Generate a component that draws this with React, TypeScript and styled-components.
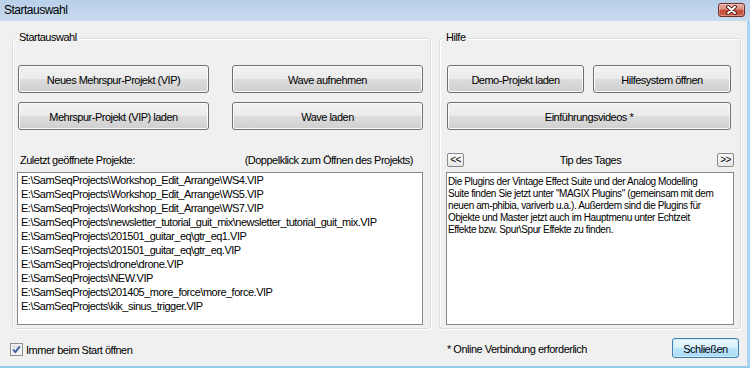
import React from "react";
import styled, { createGlobalStyle } from "styled-components";

const GlobalStyle = createGlobalStyle`
  html, body { margin: 0; padding: 0; background: #f0f0f0; }
  body { font-family: "Liberation Sans", Arial, sans-serif; }
  * { box-sizing: border-box; }
`;

const Window = styled.div`
  width: 750px;
  height: 368px;
  display: flex;
  flex-direction: column;
  overflow: hidden;
  font-family: "Liberation Sans", Arial, sans-serif;
  font-size: 11px;
  letter-spacing: -0.5px;
  color: #000;
  background: #f0f0f0;
`;

const TitleBar = styled.div`
  height: 21px;
  flex: none;
  display: flex;
  align-items: flex-start;
  justify-content: space-between;
  padding: 0 5px 0 4px;
  background: linear-gradient(#b8cfe9, #c8dbf0);
`;

const Title = styled.span`
  font-size: 12px;
  line-height: 20px;
`;

const CloseButton = styled.button`
  margin-top: 3px;
  width: 27px;
  height: 14px;
  padding: 0;
  border: 1px solid #6e2d27;
  border-radius: 3px;
  background: linear-gradient(#eab0a3 0%, #dc8a79 45%, #c64a3a 52%, #d0614f 100%);
  box-shadow: inset 0 0 0 1px rgba(255, 255, 255, 0.3);
  display: flex;
  align-items: center;
  justify-content: center;
`;

const Body = styled.div`
  flex: 1;
  display: flex;
  flex-direction: column;
  padding-top: 17px;
  border-right: 3px solid #a9d3ee;
  border-bottom: 2px solid #8fcbe9;
`;

const GroupsRow = styled.div`
  display: flex;
  gap: 8px;
  padding-left: 12px;
`;

const Group = styled.section<{ $width: number; $padL: number; $padR: number }>`
  position: relative;
  width: ${(p) => p.$width}px;
  height: 291px;
  border: 1px solid #d5dfe5;
  border-radius: 3px;
  box-shadow: inset 1px 1px 0 #fff, 1px 1px 0 #fff;
  padding: 26px ${(p) => p.$padR}px 3px ${(p) => p.$padL}px;
  display: flex;
  flex-direction: column;
`;

const Legend = styled.span`
  position: absolute;
  top: -9px;
  left: 4px;
  padding: 0 2px;
  background: #f0f0f0;
  line-height: 14px;
`;

const ButtonGrid = styled.div<{ $cols: string; $gap: number }>`
  display: grid;
  grid-template-columns: ${(p) => p.$cols};
  column-gap: ${(p) => p.$gap}px;
  row-gap: 9px;
  padding-left: 1px;
`;

const Button = styled.button<{ $span?: boolean }>`
  height: 28px;
  padding: 0;
  border: 1px solid #707070;
  border-radius: 3px;
  background: linear-gradient(#f2f2f2 0%, #ebebeb 50%, #dddddd 50%, #cfcfcf 100%);
  box-shadow: inset 0 0 0 1px #fbfbfb;
  font-family: inherit;
  font-size: 11px;
  letter-spacing: -0.5px;
  color: #000;
  padding-top: 2px;
  ${(p) => (p.$span ? "grid-column: 1 / -1;" : "")}
`;

const DefaultButton = styled(Button)`
  height: 20px;
  width: 67px;
  padding-top: 1px;
  border-color: #3c7fb1;
  background: linear-gradient(#eaf6fd 0%, #d9f0fc 50%, #bee6fd 50%, #a7d9f5 100%);
  box-shadow: inset 0 0 0 1px #cdebfb;
`;

const SectionHeader = styled.div<{ $padL: number; $padR: number }>`
  margin-top: 23px;
  height: 14px;
  display: flex;
  align-items: center;
  justify-content: space-between;
  padding: 0 ${(p) => p.$padR}px 0 ${(p) => p.$padL}px;
  line-height: 14px;
`;

const SmallButton = styled.button`
  width: 17px;
  height: 14px;
  padding: 0;
  border: 1px solid #8a8a8a;
  border-radius: 2px;
  background: linear-gradient(#fafafa, #e6e6e6);
  font-family: inherit;
  font-size: 10px;
  letter-spacing: -0.6px;
  line-height: 12px;
  color: #000;
`;

const ListBox = styled.div`
  margin-top: 5px;
  height: 153px;
  border: 1px solid #828790;
  background: #fff;
  padding: 0 0 0 3px;
  line-height: 14px;
  overflow: hidden;
`;

const ListItem = styled.div`
  white-space: nowrap;
`;

const TipBox = styled.div`
  margin-top: 5px;
  height: 153px;
  border: 1px solid #828790;
  background: #fff;
  padding: 3px 2px 0 1px;
  font-size: 10px;
  letter-spacing: -0.4px;
  line-height: 12px;
  overflow: hidden;
`;

const TipLine = styled.div`
  white-space: nowrap;
`;

const Footer = styled.div`
  margin-top: 9px;
  height: 20px;
  display: grid;
  grid-template-columns: 437px 225px 67px;
  align-items: center;
  padding-left: 10px;
`;

const CheckRow = styled.label`
  margin-top: 3px;
  display: flex;
  align-items: center;
  gap: 3px;
`;

const CheckBox = styled.span`
  width: 13px;
  height: 13px;
  border: 1px solid #8e8f8f;
  background: linear-gradient(135deg, #dcdcdc, #fbfbfb);
  box-shadow: inset 0 0 0 1px #f4f4f4;
  display: flex;
  align-items: center;
  justify-content: center;
`;

const Note = styled.span`
  margin-top: 2px;
`;

const projects = [
  "E:\\SamSeqProjects\\Workshop_Edit_Arrange\\WS4.VIP",
  "E:\\SamSeqProjects\\Workshop_Edit_Arrange\\WS5.VIP",
  "E:\\SamSeqProjects\\Workshop_Edit_Arrange\\WS7.VIP",
  "E:\\SamSeqProjects\\newsletter_tutorial_guit_mix\\newsletter_tutorial_guit_mix.VIP",
  "E:\\SamSeqProjects\\201501_guitar_eq\\gtr_eq1.VIP",
  "E:\\SamSeqProjects\\201501_guitar_eq\\gtr_eq.VIP",
  "E:\\SamSeqProjects\\drone\\drone.VIP",
  "E:\\SamSeqProjects\\NEW.VIP",
  "E:\\SamSeqProjects\\201405_more_force\\more_force.VIP",
  "E:\\SamSeqProjects\\kik_sinus_trigger.VIP",
];

const tipLines = [
  "Die Plugins der Vintage Effect Suite und der Analog Modelling",
  "Suite finden Sie jetzt unter \"MAGIX Plugins\" (gemeinsam mit dem",
  "neuen am-phibia, variverb u.a.). Außerdem sind die Plugins für",
  "Objekte und Master jetzt auch im Hauptmenu unter Echtzeit",
  "Effekte bzw. Spur\\Spur Effekte zu finden.",
];

export default function App() {
  return (
    <>
      <GlobalStyle />
      <Window>
        <TitleBar>
          <Title>Startauswahl</Title>
          <CloseButton aria-label="Schließen">
            <svg width="13" height="10" viewBox="0 0 13 10">
              <path d="M3 1.8 L10 8.2 M10 1.8 L3 8.2" stroke="#4a1a16" strokeWidth="3.8" strokeLinecap="round" />
              <path d="M3 1.8 L10 8.2 M10 1.8 L3 8.2" stroke="#ffffff" strokeWidth="2" strokeLinecap="round" />
            </svg>
          </CloseButton>
        </TitleBar>
        <Body>
          <GroupsRow>
            <Group $width={419} $padL={4} $padR={7}>
              <Legend>Startauswahl</Legend>
              <ButtonGrid $cols="191px 191px" $gap={23}>
                <Button>Neues Mehrspur-Projekt (VIP)</Button>
                <Button>Wave aufnehmen</Button>
                <Button>Mehrspur-Projekt (VIP) laden</Button>
                <Button>Wave laden</Button>
              </ButtonGrid>
              <SectionHeader $padL={3} $padR={10}>
                <span>Zuletzt geöffnete Projekte:</span>
                <span>(Doppelklick zum Öffnen des Projekts)</span>
              </SectionHeader>
              <ListBox>
                {projects.map((p) => (
                  <ListItem key={p}>{p}</ListItem>
                ))}
              </ListBox>
            </Group>
            <Group $width={302} $padL={6} $padR={6}>
              <Legend>Hilfe</Legend>
              <ButtonGrid $cols="137px 138px" $gap={9}>
                <Button>Demo-Projekt laden</Button>
                <Button>Hilfesystem öffnen</Button>
                <Button $span>Einführungsvideos *</Button>
              </ButtonGrid>
              <SectionHeader $padL={1} $padR={0}>
                <SmallButton>&lt;&lt;</SmallButton>
                <span>Tip des Tages</span>
                <SmallButton>&gt;&gt;</SmallButton>
              </SectionHeader>
              <TipBox>
                {tipLines.map((l) => (
                  <TipLine key={l}>{l}</TipLine>
                ))}
              </TipBox>
            </Group>
          </GroupsRow>
          <Footer>
            <CheckRow>
              <CheckBox>
                <svg width="9" height="9" viewBox="0 0 9 9">
                  <path d="M1.2 4.6 L3.4 7 L7.8 1.4" fill="none" stroke="#3d5a9a" strokeWidth="1.8" />
                </svg>
              </CheckBox>
              <span>Immer beim Start öffnen</span>
            </CheckRow>
            <Note>* Online Verbindung erforderlich</Note>
            <DefaultButton>Schließen</DefaultButton>
          </Footer>
        </Body>
      </Window>
    </>
  );
}
